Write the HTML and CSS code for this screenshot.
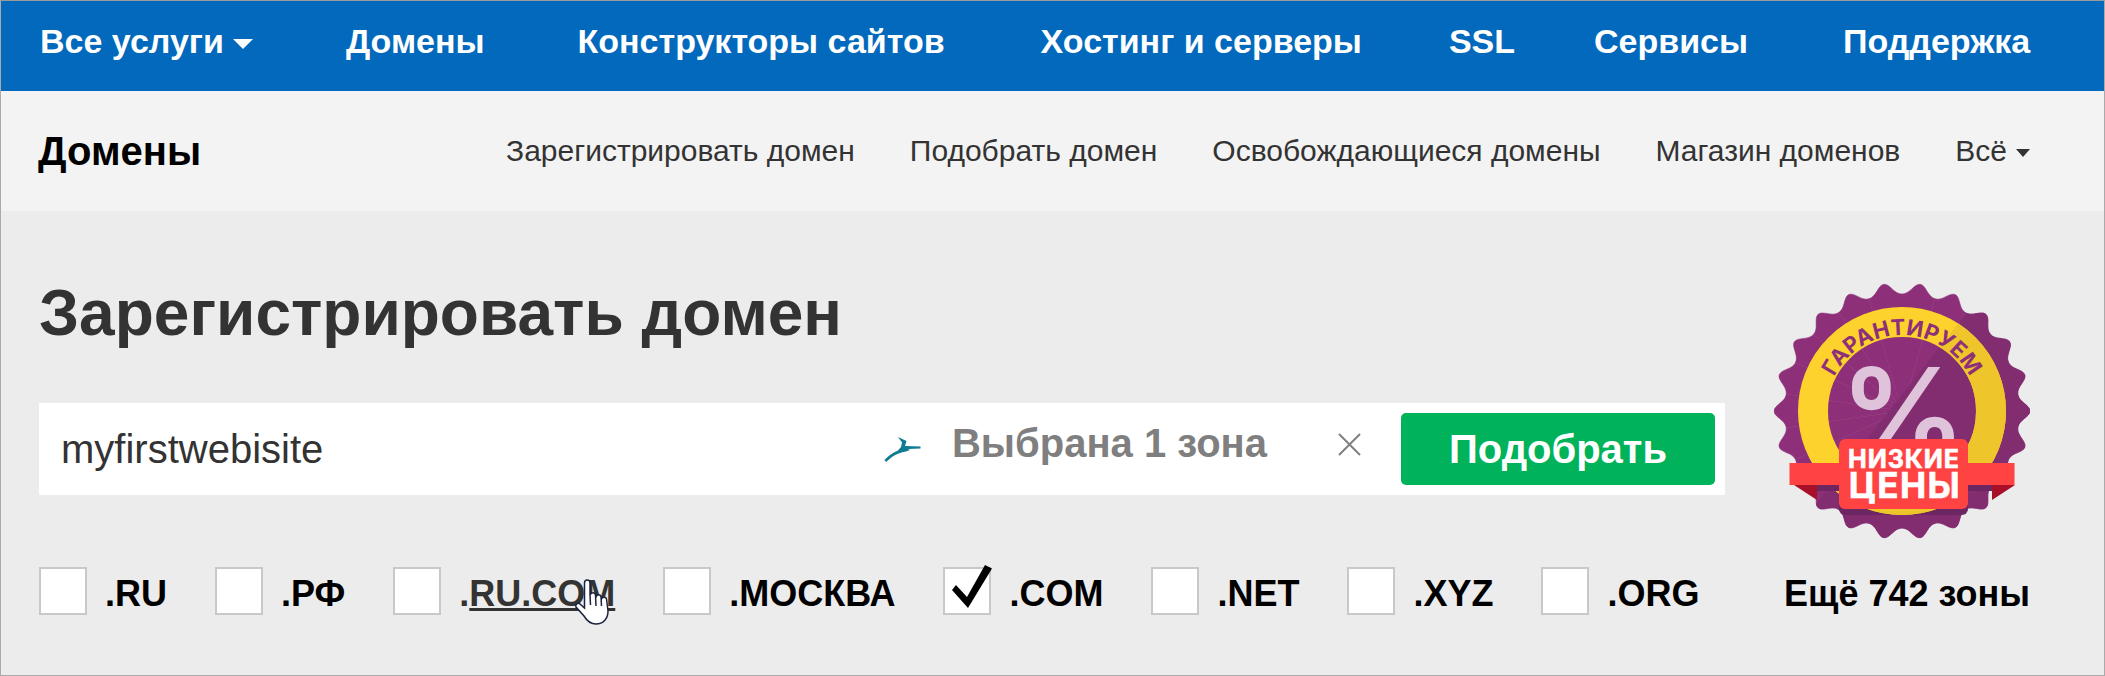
FILE: index.html
```html
<!DOCTYPE html>
<html lang="ru">
<head>
  <meta charset="UTF-8" />
  <meta name="viewport" content="width=device-width, initial-scale=1.0"/>
  <title>Зарегистрировать домен</title>
  <link rel="stylesheet" href="styles.css">
</head>
<body>
  <div class="page">
    <nav class="top-nav">
      <a class="has-caret">Все услуги</a>
      <a>Домены</a>
      <a>Конструкторы сайтов</a>
      <a>Хостинг и серверы</a>
      <a>SSL</a>
      <a>Сервисы</a>
      <a>Поддержка</a>
    </nav>

    <div class="sub-nav">
      <div class="sub-title">Домены</div>
      <div class="sub-links">
        <a>Зарегистрировать домен</a>
        <a>Подобрать домен</a>
        <a>Освобождающиеся домены</a>
        <a>Магазин доменов</a>
        <a class="has-caret">Всё</a>
      </div>
    </div>

    <main class="content">
      <div class="search-col">
        <h1>Зарегистрировать домен</h1>
        <div class="search-box">
          <div class="search-text">myfirstwebisite</div>
          <svg class="deer" viewBox="0 0 37 25" width="37" height="25">
            <path d="M0.5 23 C5 18 9 15.5 14 13.5 L17 10 L18 5.5 L14 0 L22.5 4 L21 9 L36.5 9.5 L36.5 11.5 L24 12 L26 13 L22 14.5 C17 15.5 12 17 8 20 L2 25 Z" />
          </svg>
          <div class="zone-text">Выбрана 1 зона</div>
          <svg class="close-x" viewBox="0 0 23 23" width="23" height="23">
            <path d="M1 1 L22 22 M22 1 L1 22" />
          </svg>
          <button class="pick-btn">Подобрать</button>
        </div>
      </div>

      <svg class="badge" viewBox="-128 -128 256 256" width="256" height="256">
        <defs>
          <path id="scallop" d="M-16.65 -115.8 C-8.7 -116.9 -6 -128 0 -128 C6 -128 8.7 -116.9 16.65 -115.8 L0 0 Z" />
          <g id="burst-half">
            <use href="#scallop" transform="rotate(8.18)" />
            <use href="#scallop" transform="rotate(24.55)" />
            <use href="#scallop" transform="rotate(40.91)" />
            <use href="#scallop" transform="rotate(57.27)" />
            <use href="#scallop" transform="rotate(73.64)" />
            <use href="#scallop" transform="rotate(90)" />
            <use href="#scallop" transform="rotate(106.36)" />
            <use href="#scallop" transform="rotate(122.73)" />
            <use href="#scallop" transform="rotate(139.09)" />
            <use href="#scallop" transform="rotate(155.45)" />
            <use href="#scallop" transform="rotate(171.82)" />
          </g>
          <g id="burst">
            <use href="#burst-half" />
            <use href="#burst-half" transform="rotate(180)" />
          </g>
          <clipPath id="shade-clip">
            <polygon points="88,-128 128,-128 128,128 -128,128 -90,98" />
          </clipPath>
          <path id="ring-arc" d="M-73.4 -19.7 A76 76 0 0 1 73.4 -19.7" />
        </defs>

        <g class="burst-light"><use href="#burst" /></g>
        <g class="burst-dark" clip-path="url(#shade-clip)"><use href="#burst" /></g>
        <rect class="box-shadow" x="-63" y="28" width="129" height="76" rx="6" />
        <circle class="ring" r="89" />
        <circle class="ring ring-dark" r="89" clip-path="url(#shade-clip)" />
        <text class="ring-text"><textPath href="#ring-arc" startOffset="50%" text-anchor="middle">ГАРАНТИРУЕМ</textPath></text>
        <text class="percent" x="1" y="48" text-anchor="middle">%</text>

        <rect class="ribbon-shadow" x="-85" y="73" width="175" height="7" />
        <polygon class="ribbon-fold" points="-108,74 -85,74 -85,89" />
        <polygon class="ribbon-fold" points="113,74 90,74 90,89" />
        <rect class="ribbon" x="-112.5" y="52" width="225" height="22" />
        <rect class="ribbon" x="-63" y="28" width="129" height="70" rx="6" />
        <text class="low-top" x="2" y="57" text-anchor="middle">НИЗКИЕ</text>
        <text class="low-bottom" x="3" y="87" text-anchor="middle">ЦЕНЫ</text>
      </svg>
    </main>

    <div class="zones">
      <label class="zone"><span class="check"></span>.RU</label>
      <label class="zone"><span class="check"></span>.РФ</label>
      <label class="zone zone-hover"><span class="check"></span><span>.<u>RU.COM</u></span>
        <svg class="hand" viewBox="0 0 35 46" width="35" height="46">
          <path d="M9.5 4 C9.5 0 15 0 15 4 L15 16 C16 13 20 13 20.5 16 L21 18 C22 15 25.5 15 26 18 L26.5 20 C27.5 17.5 31 17.5 31.5 20 L33 32 C33 40 28 45 21 45 C15 45 12 42 9 37 L1 28 C0 25 3 23.5 5 25 L9.5 29 Z M15 16 L15.5 26 M20.5 16 L21 27 M26 18 L26.5 27" />
        </svg>
      </label>
      <label class="zone"><span class="check"></span>.МОСКВА</label>
      <label class="zone">
        <span class="check">
          <svg class="tick" viewBox="0 0 40 43" width="40" height="43">
            <path d="M0 25 L4 20 L15 32 L33 0 L40 3.5 L16 43 Z" />
          </svg>
        </span>.COM
      </label>
      <label class="zone"><span class="check"></span>.NET</label>
      <label class="zone"><span class="check"></span>.XYZ</label>
      <label class="zone"><span class="check"></span>.ORG</label>
      <div class="more-zones">Ещё 742 зоны</div>
    </div>
  </div>
</body>
</html>
```

FILE: styles.css
```css
body {
  margin: 0;
  font-family: 'Liberation Sans', Arial, sans-serif;
  background-color: white;
}

.page {
  width: 2105px;
  height: 676px;
  box-sizing: border-box;
  border: 1px solid #aaa;
  border-top-color: #999;
  background-color: #ececec;
  overflow: hidden;
}

/* верхнее меню */
.top-nav {
  display: flex;
  align-items: center;
  height: 90px;
  padding: 0 0 10px 39px;
  box-sizing: border-box;
  background-color: #0269bd;
  color: white;
  font-size: 34px;
  font-weight: bold;
}

.top-nav a + a { margin-left: 93px; }
.top-nav a:nth-child(4) { margin-left: 96px; }
.top-nav a:nth-child(5) { margin-left: 87px; }
.top-nav a:nth-child(6) { margin-left: 79px; }
.top-nav a:nth-child(7) { margin-left: 95px; }

.has-caret::after {
  content: "";
  display: inline-block;
  margin-left: 9px;
  vertical-align: middle;
  border-left: 10px solid transparent;
  border-right: 10px solid transparent;
  border-top: 10px solid currentColor;
}

.sub-nav {
  display: flex;
  justify-content: space-between;
  align-items: center;
  height: 120px;
  padding: 0 74px 0 37px;
  box-sizing: border-box;
  background-color: #f3f3f3;
}

.sub-title {
  font-size: 40px;
  font-weight: bold;
  color: black;
}

.sub-links {
  display: flex;
  gap: 55px;
  font-size: 30px;
  color: #333;
}

.sub-links .has-caret::after {
  margin-left: 9px;
  border-left-width: 7px;
  border-right-width: 7px;
  border-top-width: 8px;
}

/* заголовок и поиск */
.content {
  display: flex;
  justify-content: space-between;
  padding: 65px 74px 0 38px;
  height: 356px;
  box-sizing: border-box;
}

.search-col {
  width: 1686px;
}

h1 {
  margin: 0 0 53px;
  font-size: 64px;
  line-height: 74px;
  font-weight: bold;
  color: #333;
}

.search-box {
  display: flex;
  align-items: center;
  height: 92px;
  padding: 0 10px 0 22px;
  box-sizing: border-box;
  background-color: white;
}

.search-text {
  flex: 1;
  font-size: 40px;
  color: #333;
}

.deer {
  fill: #0e7c93;
  margin-right: 31px;
}

.zone-text {
  font-size: 40px;
  font-weight: bold;
  color: #7f7f7f;
  margin-bottom: 11px;
}

.close-x {
  margin: 0 40px 10px 71px;
  fill: none;
  stroke: #808080;
  stroke-width: 2;
}

.pick-btn {
  width: 314px;
  height: 72px;
  border: none;
  border-radius: 5px;
  background-color: #00b25a;
  color: white;
  font-family: inherit;
  font-size: 40px;
  font-weight: bold;
}

/* значок */
.badge {
  margin-top: 7px;
  flex: none;
}

.burst-light { fill: #8e3079; stroke: #8e3079; stroke-width: 0.5; }
.burst-dark { fill: #832d71; stroke: #832d71; stroke-width: 0.5; }

.ring {
  fill: none;
  stroke: #fdd22c;
  stroke-width: 30;
}

.ring-dark { stroke: #eec52b; }

.ring-text {
  font-family: 'Inter', sans-serif;
  font-size: 22px;
  font-weight: 700;
  fill: #8e3079;
}

.percent {
  font-family: 'Inter', sans-serif;
  font-size: 126px;
  font-weight: 600;
  fill: #dfc3da;
}

.box-shadow { fill: #6c2762; }
.ribbon-shadow { fill: #6c2762; }
.ribbon-fold { fill: #a8102a; }
.ribbon { fill: #ff4343; }

.low-top, .low-bottom {
  font-family: 'Inter', sans-serif;
  font-weight: 700;
  fill: white;
  stroke: white;
  stroke-width: 0.6;
}

.low-top { font-size: 25px; letter-spacing: 1px; }
.low-bottom { font-size: 35px; letter-spacing: 1.5px; }

/* доменные зоны */
.zones {
  display: flex;
  align-items: center;
  gap: 48px;
  padding: 0 74px 0 38px;
  color: black;
  font-size: 36px;
  font-weight: bold;
}

.zone {
  display: flex;
  align-items: center;
  position: relative;
}

.check {
  display: block;
  position: relative;
  width: 48px;
  height: 48px;
  margin-right: 18px;
  margin-bottom: 6px;
  box-sizing: border-box;
  border: 2px solid #c8c8c8;
  background-color: white;
}

.tick {
  position: absolute;
  left: 7px;
  top: -4px;
  fill: black;
}

.zone-hover { color: #333; }

.zone-hover u {
  text-underline-offset: 2px;
  text-decoration-thickness: 3px;
  text-decoration-skip-ink: none;
}

.hand {
  position: absolute;
  right: 5px;
  top: 12px;
  fill: white;
  stroke: #1c2340;
  stroke-width: 1.5;
}

.more-zones {
  margin-left: auto;
}
```
